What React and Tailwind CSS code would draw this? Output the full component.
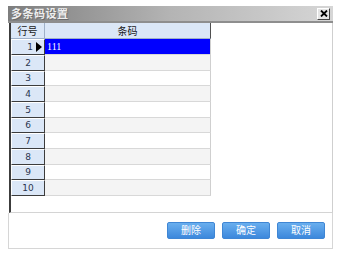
import React from "react";

const rowHeights = [16, 16, 15, 16, 16, 15, 16, 16, 15, 16];

export default function App() {
  const cjk = { fontFamily: '"Noto Sans CJK SC", "Noto Sans", sans-serif' };
  return (
    <div className="w-[338px] h-[256px] bg-white pt-[6px] pl-[8px]" style={cjk}>
      <div className="w-[325px] flex flex-col">
        {/* title bar */}
        <div className="h-[15px] bg-gradient-to-r from-[#7e7e7e] via-[#b4b4b4] to-[#d6d6d6] flex items-center justify-between pl-[3px] pr-[3px]">
          <span className="text-[11px] leading-none font-bold text-[#eeeeee] [text-shadow:1px_1px_0_#6a6a6a] tracking-[0.5px]">
            多条码设置
          </span>
          <div className="w-[13px] h-[12px] bg-[#e4e4e4] border border-t-white border-l-white border-r-[#404040] border-b-[#404040] flex items-center justify-center">
            <svg width="8" height="7" viewBox="0 0 8 7">
              <path d="M1 0.5 L7 6.5 M7 0.5 L1 6.5" stroke="#000" strokeWidth="1.8" />
            </svg>
          </div>
        </div>
        <div className="h-[2px] bg-[#8e8e8e]" />
        {/* grid area */}
        <div className="h-[190px] ml-[1px] border-l-[2px] border-l-[#3c3c3c] border-r border-r-[#cfcfcf] border-b border-b-[#d4d4d4] bg-white flex flex-col">
          <div className="w-[200px] flex flex-col">
            <div className="h-[16px] flex">
              <div className="w-[34px] h-full bg-[#dbe7f7] border-r border-b border-[#9fb0c8] flex items-center justify-center text-[10px] leading-none text-[#1a1a1a]">
                行号
              </div>
              <div className="w-[166px] h-full bg-[#dbe7f7] border-b border-b-[#9fb0c8] border-r border-r-[#505050] flex items-center justify-center text-[10px] leading-none text-[#1a1a1a]">
                条码
              </div>
            </div>
            {rowHeights.map((h, i) => (
              <div key={i} className="flex" style={{ height: h }}>
                <div
                  className={
                    "w-[34px] h-full bg-[#dbe7f7] border-t border-t-white border-l border-l-white border-r border-r-[#3c3c3c] border-b border-b-[#3c3c3c] flex items-center text-[9px] leading-none text-[#2a3550] " +
                    (i === 0 ? "justify-end pr-[2px] gap-[3px]" : "justify-center")
                  }
                  style={{ fontFamily: '"DejaVu Sans", sans-serif' }}
                >
                  <span>{i + 1}</span>
                  {i === 0 && (
                    <svg width="6" height="10" viewBox="0 0 6 10">
                      <path d="M0 0 L6 5 L0 10 Z" fill="#000" />
                    </svg>
                  )}
                </div>
                <div
                  className={
                    "w-[166px] h-full border-r border-r-[#cfcfcf] border-b border-b-[#d8d8d8] flex items-center pl-[2px] text-[10px] leading-none " +
                    (i === 0
                      ? "bg-[#0000ff] text-white"
                      : i % 2 === 1
                      ? "bg-[#f4f4f4]"
                      : "bg-white")
                  }
                  style={{ fontFamily: '"Liberation Serif", serif' }}
                >
                  {i === 0 ? "111" : ""}
                </div>
              </div>
            ))}
          </div>
        </div>
        {/* bottom panel */}
        <div className="h-[36px] border-l border-r border-b border-[#d6d6d6] bg-white flex items-center justify-end gap-[7px] pr-[7px] pb-[1px]">
          {["删除", "确定", "取消"].map((t) => (
            <div
              key={t}
              className="w-[48px] h-[17px] rounded-[2px] bg-gradient-to-b from-[#69aeee] to-[#3c88dc] border border-[#3f86d4] flex items-center justify-center text-[10px] leading-none text-white"
            >
              {t}
            </div>
          ))}
        </div>
      </div>
    </div>
  );
}
